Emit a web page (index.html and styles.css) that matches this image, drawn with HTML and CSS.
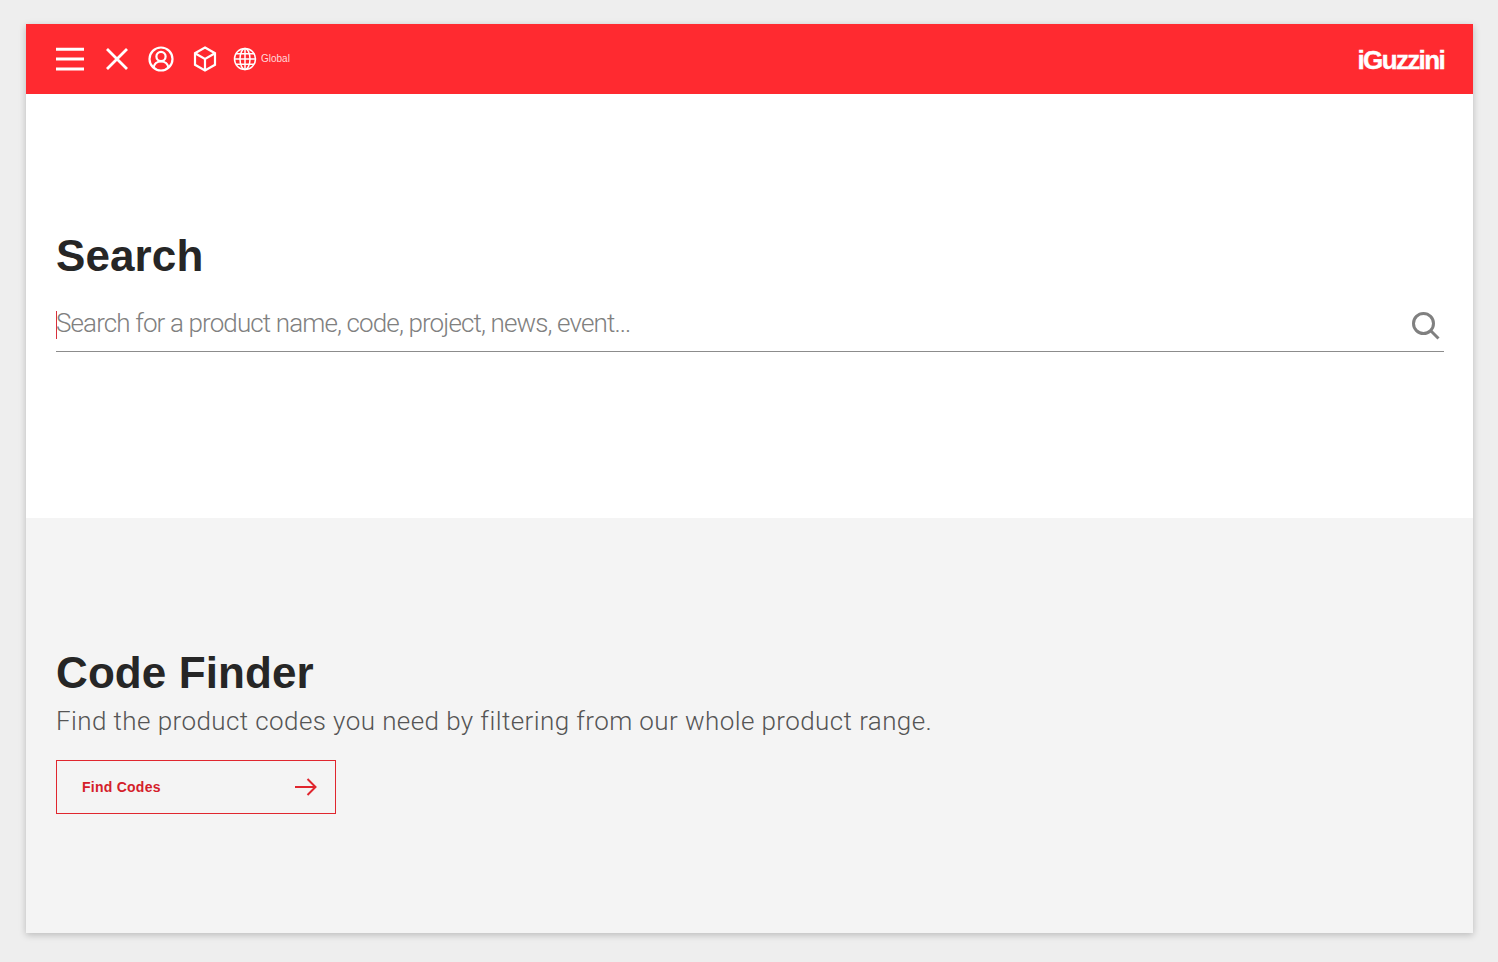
FILE: index.html
```html
<!DOCTYPE html>
<html lang="en">
<head>
<meta charset="utf-8">
<title>iGuzzini Search</title>
<link rel="stylesheet" href="styles.css">
</head>
<body>
<div class="window">
  <header class="topbar">
    <nav class="tools">
      <svg class="icon menu" viewBox="0 0 28 24"><path d="M0 2.300h28M0 12h28M0 22h28"/></svg>
      <svg class="icon close" viewBox="0 0 22 22"><path d="M1 1l20 20M21 1L1 21"/></svg>
      <svg class="icon user" viewBox="0 0 26 26"><circle cx="13" cy="13" r="11.500"/><circle cx="13" cy="10.500" r="4.600"/><path d="M5.500 21.500c.8-4 3.500-6 7.500-6s6.700 2 7.500 6"/></svg>
      <svg class="icon box" viewBox="0 0 24 26"><path d="M12 1.500l10 5.700v11.600l-10 5.700-10-5.700V7.200zM2 7.200l10 5.800 10-5.800M12 13v11.500"/></svg>
      <div class="locale">
        <svg class="icon globe" viewBox="0 0 24 24"><circle cx="12" cy="12" r="10.500"/><ellipse cx="12" cy="12" rx="5" ry="10.500"/><path d="M12 1.500v21M1.500 12h21M3 6.800h18M3 17.200h18"/></svg>
        <span class="locale-label">Global</span>
      </div>
    </nav>
    <div class="logo">iGuzzini</div>
  </header>
  <section class="search">
    <h1 class="title">Search</h1>
    <div class="field">
      <span class="caret"></span>
      <span class="placeholder">Search for a product name, code, project, news, event...</span>
      <svg class="search-icon" viewBox="0 0 28 28"><circle cx="11.500" cy="11.500" r="10"/><path d="M18.500 18.500l8 8"/></svg>
    </div>
  </section>
  <section class="finder">
    <h2 class="title">Code Finder</h2>
    <p class="lead">Find the product codes you need by filtering from our whole product range.</p>
    <a class="button">
      <span>Find Codes</span>
      <svg class="arrow" viewBox="0 0 22 18"><path d="M0 9h20.500M12.500 1l8 8-8 8"/></svg>
    </a>
  </section>
</div>
</body>
</html>
```
FILE: styles.css
```css
* { box-sizing: border-box; }
html, body { margin: 0; height: 100%; }
body {
  background: #eeeeee;
  padding: 24px 25px 29px 26px;
  font-family: "Liberation Sans", Arial, sans-serif;
  overflow: hidden;
}
.window {
  height: 909px;
  background: #fff;
  box-shadow: 0 2px 7px rgba(0, 0, 0, .22);
  display: flex;
  flex-direction: column;
}
.topbar {
  height: 70px;
  flex: none;
  background: #ff2a30;
  display: flex;
  align-items: center;
  justify-content: space-between;
  padding: 0 29px 0 30px;
  color: #fff;
}
.tools { display: flex; align-items: center; }
.icon { display: block; fill: none; stroke: #fff; }
.menu { width: 28px; height: 24px; stroke-width: 3; margin-right: 22px; }
.close { width: 22px; height: 22px; stroke-width: 2.800; margin-right: 20px; }
.user { width: 26px; height: 26px; stroke-width: 2.200; margin-right: 19px; }
.box { width: 24px; height: 26px; stroke-width: 2.200; margin-right: 16px; }
.globe { width: 24px; height: 24px; stroke-width: 1.500; }
.locale { display: flex; align-items: center; gap: 4px; }
.locale-label { font-size: 10px; letter-spacing: 0; color: #ffd9da; margin-bottom: 2px; }
.logo {
  font-size: 26px;
  font-weight: 700;
  letter-spacing: -1.650px;
  line-height: 30px;
  margin-top: 2px;
  -webkit-text-stroke: .4px #fff;
}
.search { height: 424px; flex: none; padding: 135px 29px 0 30px; }
.title {
  margin: 0;
  font-size: 44px;
  line-height: 54px;
  font-weight: 700;
  letter-spacing: .1px;
  color: #262626;
}
.field {
  margin-top: 19px;
  height: 50px;
  border-bottom: 1px solid #8c8c8c;
  display: flex;
  align-items: center;
  padding-bottom: 8px;
  position: relative;
}
.caret {
  width: 1px;
  height: 28px;
  background: #d8303c;
  flex: none;
  margin-top: 4px;
}
.placeholder {
  font-family: Roboto, "Liberation Sans", sans-serif;
  font-size: 26px;
  font-weight: 300;
  letter-spacing: -.88px;
  color: #808080;
  flex: 1;
  line-height: 30px;
  margin-left: -1px;
}
.search-icon {
  width: 28px;
  height: 28px;
  margin: 7px 4px 0 0;
  fill: none;
  stroke: #808080;
  stroke-width: 3;
}
.finder {
  flex: 1;
  background: #f4f4f4;
  padding: 128px 29px 0 30px;
}
.lead {
  margin: 5px 0 0;
  font-family: Roboto, "Liberation Sans", sans-serif;
  font-size: 26px;
  font-weight: 300;
  letter-spacing: .41px;
  line-height: 32px;
  color: #555;
}
.button {
  margin-top: 23px;
  width: 280px;
  height: 54px;
  border: 1px solid #e0262e;
  display: flex;
  align-items: center;
  justify-content: space-between;
  padding: 0 18px 0 25px;
  color: #d4202a;
  font-size: 14px;
  font-weight: 700;
  letter-spacing: .25px;
}
.arrow { width: 22px; height: 18px; fill: none; stroke: #e0262e; stroke-width: 2; }
```
